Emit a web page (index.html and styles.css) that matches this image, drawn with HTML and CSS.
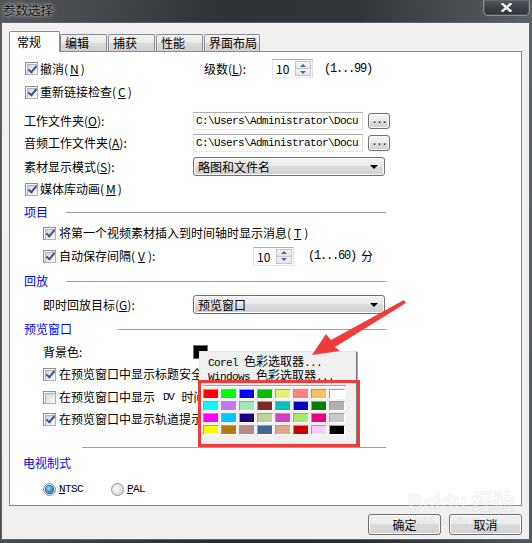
FILE: index.html
```html
<!DOCTYPE html>
<html lang="zh-CN">
<head>
<meta charset="utf-8">
<title>参数选择</title>
<link rel="stylesheet" href="styles.css">
</head>
<body>
<div class="window">
  <div class="titlebar">
    <span class="title">参数选择</span>
    <div class="close">
      <svg width="11" height="9" viewBox="0 0 11 9"><path d="M1.5 1 L9.5 8 M9.5 1 L1.5 8" stroke="#fff" stroke-width="2.4" stroke-linecap="square"/></svg>
    </div>
  </div>

  <div class="client">
    <div class="tabs">
      <div class="tab active">常规</div>
      <div class="tab">编辑</div>
      <div class="tab">捕获</div>
      <div class="tab">性能</div>
      <div class="tab wide">界面布局</div>
    </div>

    <div class="panel">
      <div class="row tall">
        <label class="check top w-undo"><span class="cb on"></span>撤消(<u>N</u>)</label>
        <span class="w-level">级数(<u>L</u>):</span>
        <span class="spin"><span class="spin-val">10</span><span class="spin-btns"><i class="up"></i><i class="down"></i></span></span>
        <span class="lat range">(1...99)</span>
      </div>

      <div class="row mt5">
        <label class="check top"><span class="cb on"></span>重新链接检查(<u>C</u>)</label>
      </div>

      <div class="row mt11">
        <span class="w-label">工作文件夹(<u>O</u>):</span>
        <span class="edit path"><span class="lat">C:\Users\Administrator\Docu</span></span>
        <span class="btn dots">...</span>
      </div>

      <div class="row mt4">
        <span class="w-label">音频工作文件夹(<u>A</u>):</span>
        <span class="edit path"><span class="lat">C:\Users\Administrator\Docu</span></span>
        <span class="btn dots">...</span>
      </div>

      <div class="row tall mt5">
        <span class="w-label">素材显示模式(<u>S</u>):</span>
        <span class="combo">略图和文件名</span>
      </div>

      <div class="row mt4">
        <label class="check top"><span class="cb on"></span>媒体库动画(<u>M</u>)</label>
      </div>

      <div class="row mt5 heading">
        <span>项目</span><span class="rule rule-a"></span>
      </div>

      <div class="row mt3 sub">
        <label class="check"><span class="cb on"></span>将第一个视频素材插入到时间轴时显示消息(<u>T</u>)</label>
      </div>

      <div class="row mt5 sub">
        <label class="check w-auto"><span class="cb on"></span>自动保存间隔(<u>V</u>):</label>
        <span class="spin"><span class="spin-val">10</span><span class="spin-btns"><i class="up"></i><i class="down"></i></span></span>
        <span class="lat range wide">(1...60)</span><span class="unit">分</span>
      </div>

      <div class="row mt7 heading">
        <span>回放</span><span class="rule rule-a"></span>
      </div>

      <div class="row tall mt5 sub">
        <span class="w-sublabel">即时回放目标(<u>G</u>):</span>
        <span class="combo">预览窗口</span>
      </div>

      <div class="row mt6 heading">
        <span>预览窗口</span><span class="rule rule-b"></span>
      </div>

      <div class="row mt5 sub">
        <span class="w-sublabel">背景色:</span>
        <span class="color-well"></span>
      </div>

      <div class="row mt4 sub">
        <label class="check"><span class="cb on"></span>在预览窗口中显示标题安全区域(<u>A</u>)</label>
      </div>

      <div class="row mt5 sub">
        <label class="check"><span class="cb"></span>在预览窗口中显示<span class="lat dv"> DV </span>时间码(<u>D</u>)</label>
      </div>

      <div class="row mt4 sub">
        <label class="check"><span class="cb on"></span>在预览窗口中显示轨道提示(<u>R</u>)</label>
      </div>

      <div class="rule rule-c"></div>

      <div class="row mt6 heading tv">
        <span>电视制式</span>
      </div>

      <div class="row mt8 sub">
        <label class="radio-item"><span class="radio on"></span><span class="lat"><u>N</u>TSC</span></label>
        <label class="radio-item"><span class="radio"></span><span class="lat"><u>P</u>AL</span></label>
      </div>
    </div>

    <div class="actions">
      <button class="btn action">确定</button>
      <button class="btn action">取消</button>
    </div>
  </div>

  <div class="watermark">
    <span class="wm-big">Baidu 经验</span>
    <span class="wm-small">jingyan.baidu.com</span>
  </div>

  <div class="popup">
    <div class="menu-item"><span class="lat">Corel </span>色彩选取器<span class="lat">...</span></div>
    <div class="menu-item"><span class="lat">Windows </span>色彩选取器<span class="lat">...</span></div>
    <div class="menu-sep"></div>
    <div class="swatches">
      <span style="background:#ff0000"></span><span style="background:#00ff00"></span><span style="background:#0000ff"></span><span style="background:#00c000"></span><span style="background:#e8f070"></span><span style="background:#ff8080"></span><span style="background:#f8c060"></span><span style="background:#ffffff"></span>
      <span style="background:#00ffff"></span><span style="background:#c078f0"></span><span style="background:#a0e8b8"></span><span style="background:#7a2c20"></span><span style="background:#00c0c0"></span><span style="background:#0000c0"></span><span style="background:#008000"></span><span style="background:#b0b0b0"></span>
      <span style="background:#ff00ff"></span><span style="background:#00c8ff"></span><span style="background:#180080"></span><span style="background:#c0d098"></span><span style="background:#d040c8"></span><span style="background:#a8e870"></span><span style="background:#e80080"></span><span style="background:#c8c8c8"></span>
      <span style="background:#ffff00"></span><span style="background:#b87810"></span><span style="background:#b88888"></span><span style="background:#406890"></span><span style="background:#e0a888"></span><span style="background:#c80000"></span><span style="background:#ffc8ff"></span><span style="background:#000000"></span>
    </div>
  </div>

  <div class="highlight"></div>

  <svg class="arrow" width="115" height="65" viewBox="0 0 115 65">
    <polygon points="12,60 26,39 31,45 104,5 106,8 35,52 40,56" fill="#ef3b3b"/>
  </svg>
</div>
</body>
</html>
```

FILE: styles.css
```css
* { box-sizing: border-box; }

html, body {
  margin: 0;
  padding: 0;
}

body {
  width: 532px;
  height: 543px;
  overflow: hidden;
  background: #2b2f34;
  font-family: "Noto Sans CJK SC", "Noto Sans", sans-serif;
  font-size: 12px;
  color: #000;
}

u { text-decoration: underline; text-underline-offset: 1px; }

.lat {
  font-family: "Liberation Mono", "Noto Sans CJK SC", monospace;
  font-size: 11px;
  letter-spacing: -0.6px;
  white-space: pre;
}

.lat.dv { letter-spacing: -1.5px; }

/* ---------- window frame ---------- */
.window {
  position: relative;
  width: 532px;
  height: 543px;
  background:
    linear-gradient(180deg, rgba(255,255,255,0.04), rgba(0,0,0,0.05)),
    linear-gradient(90deg, #4b4f54 0%, #3d4146 18%, #272b30 42%, #2a2e33 68%, #4a4f54 92%, #565b60 100%);
}

.titlebar {
  height: 22px;
  display: flex;
  justify-content: space-between;
  align-items: flex-start;
}

.title {
  margin: 2px 0 0 3px;
  font-size: 12.5px;
  line-height: 16px;
  color: #111;
  text-shadow: 0 0 3px rgba(255,255,255,0.75), 0 0 6px rgba(255,255,255,0.5);
}

.close {
  width: 47px;
  height: 16px;
  margin-right: 2px;
  border: 1px solid #8d9298;
  border-top: none;
  border-radius: 0 0 5px 5px;
  background: linear-gradient(#52575d, #3b4046 50%, #2f3439);
  box-shadow: inset 0 0 0 1px rgba(255,255,255,0.12);
  display: flex;
  align-items: center;
  justify-content: center;
}

/* ---------- client area ---------- */
.client {
  margin-left: 1px;
  width: 529px;
  height: 518px;
  border: 1px solid #60656a;
  background: #f0f0f0;
  padding: 8px 0 0 7px;
}

.tabs {
  display: flex;
  align-items: flex-end;
  height: 20px;
  position: relative;
  z-index: 1;
}

.tab {
  width: 47px;
  height: 17px;
  margin-left: 1px;
  padding-left: 4px;
  border: 1px solid #898c95;
  border-bottom: none;
  border-radius: 2px 2px 0 0;
  background: linear-gradient(#f3f3f3, #ebebeb 45%, #dddddd 50%, #cfcfcf);
  line-height: 16px;
}

.tab.active {
  width: 51px;
  height: 21px;
  margin: 0 0 -1px 0;
  padding-left: 7px;
  background: #fff;
  line-height: 19px;
}

.tab.active + .tab { margin-left: 0; }

.tab.wide { width: 56px; }

.panel {
  width: 513px;
  height: 455px;
  border: 1px solid #898c95;
  background: #fff;
  padding: 7px 0 0 14px;
  display: flex;
  flex-direction: column;
}

.row {
  display: flex;
  align-items: center;
  height: 18px;
  flex: none;
  line-height: 16px;
  white-space: nowrap;
}

.row.tall { height: 19px; }

.mt3 { margin-top: 3px; }
.mt4 { margin-top: 4px; }
.mt5 { margin-top: 5px; }
.mt6 { margin-top: 6px; }
.mt7 { margin-top: 7px; }
.mt8 { margin-top: 8px; }
.mt11 { margin-top: 11px; }

.sub { padding-left: 19px; }

/* ---------- check boxes ---------- */
.check {
  display: flex;
  align-items: center;
  gap: 3px;
}

.check.top { margin-left: 1px; gap: 2px; }

.w-undo { width: 179px; }
.w-level { width: 68px; }
.w-label { width: 169px; }
.w-sublabel { width: 150px; }
.w-auto { width: 210px; }

.cb {
  position: relative;
  width: 13px;
  height: 13px;
  flex: none;
  border: 1px solid #8e8f8f;
  background: #f4f4f4;
}

.cb::before {
  content: "";
  position: absolute;
  left: 1px;
  top: 1px;
  width: 9px;
  height: 9px;
  border: 1px solid #b0b4ba;
  background: linear-gradient(135deg, #cdd1d7, #eef0f2 60%, #f8f8f8);
}

.cb.on::after {
  content: "";
  position: absolute;
  left: 3.5px;
  top: 0.5px;
  width: 3px;
  height: 7px;
  border: solid #3b558f;
  border-width: 0 2px 2px 0;
  transform: rotate(40deg);
}

/* ---------- spin boxes ---------- */
.spin {
  width: 41px;
  height: 19px;
  border: 1px solid;
  border-color: #abadb3 #dbdfe6 #e3e9ef #e2e3ea;
  background: #fff;
  display: flex;
  justify-content: space-between;
  padding: 1px;
}

.spin-val {
  padding-left: 2px;
  line-height: 15px;
}

.spin-btns {
  width: 16px;
  display: flex;
  flex-direction: column;
}

.spin-btns i {
  flex: 1;
  display: flex;
  align-items: center;
  justify-content: center;
  border: 1px solid #c2c5ca;
  background: linear-gradient(#f7f7f7, #e4e4e4);
}

.spin-btns i + i { border-top: none; }

.spin-btns .up::after,
.spin-btns .down::after {
  content: "";
  border-left: 3px solid transparent;
  border-right: 3px solid transparent;
}

.spin-btns .up::after { border-bottom: 3px solid #4a67a3; }
.spin-btns .down::after { border-top: 3px solid #4a67a3; }

.range { margin-left: 11px; font-size: 12px; letter-spacing: -1.2px; }
.range.wide { margin-left: 14px; }
.unit { margin-left: 5px; }

/* ---------- edits, combos, buttons ---------- */
.edit {
  height: 18px;
  border: 1px solid;
  border-color: #abadb3 #dbdfe6 #e3e9ef #e2e3ea;
  background: #fff;
  overflow: hidden;
  display: flex;
  align-items: center;
  padding-left: 2px;
}

.path { width: 170px; }

.btn {
  border: 1px solid #707070;
  border-radius: 3px;
  background: linear-gradient(#f2f2f2, #ebebeb 49%, #dddddd 50%, #cfcfcf);
  box-shadow: inset 0 0 0 1px #fbfbfb;
  display: flex;
  align-items: center;
  justify-content: center;
  font: inherit;
  color: #000;
  padding: 0;
}

.dots {
  width: 22px;
  height: 16px;
  margin-left: 5px;
  font-family: "Liberation Mono", monospace;
  font-size: 10px;
  letter-spacing: -1px;
  line-height: 10px;
  align-items: flex-end;
  padding-bottom: 2px;
}

.combo {
  position: relative;
  width: 192px;
  height: 19px;
  border: 1px solid #707070;
  border-radius: 3px;
  background: linear-gradient(#f2f2f2, #ebebeb 49%, #dddddd 50%, #cfcfcf);
  box-shadow: inset 0 0 0 1px #fbfbfb;
  padding-left: 4px;
  line-height: 17px;
}

.combo::after {
  content: "";
  position: absolute;
  right: 6px;
  top: 7px;
  border-left: 4px solid transparent;
  border-right: 4px solid transparent;
  border-top: 4px solid #000;
}

/* ---------- section headings ---------- */
.heading {
  color: #0000ff;
  justify-content: space-between;
  width: 362px;
}

.heading.tv { margin-left: -1px; }

.rule {
  height: 1px;
  background: #a0a0a0;
}

.rule-a { width: 320px; }
.rule-b { width: 268px; }

.rule-c {
  width: 304px;
  margin: 19px 0 0 58px;
  flex: none;
}

.color-well {
  width: 15px;
  height: 14px;
  background: #000;
  border: 1px solid #6e6e6e;
}

/* ---------- radio buttons ---------- */
.radio-item {
  display: flex;
  align-items: center;
  gap: 3px;
  width: 68px;
}

.radio {
  width: 13px;
  height: 13px;
  border-radius: 50%;
  border: 1px solid #8e8f8f;
  background: radial-gradient(circle at 40% 40%, #fdfdfd, #dcdcdc 70%, #c8c8c8);
  display: flex;
  align-items: center;
  justify-content: center;
}

.radio.on::after {
  content: "";
  width: 7px;
  height: 7px;
  border-radius: 50%;
  background: radial-gradient(circle at 40% 35%, #9fdcff, #2f8fdb 55%, #0c4a8c);
  box-shadow: 0 0 0 1px #1d5a94;
}

/* ---------- dialog buttons ---------- */
.actions {
  width: 513px;
  margin-top: 8px;
  display: flex;
  justify-content: flex-end;
  gap: 8px;
}

.action {
  width: 73px;
  height: 21px;
}

/* ---------- overlays ---------- */
.watermark {
  position: absolute;
  left: 397px;
  top: 490px;
  display: flex;
  flex-direction: column;
  align-items: flex-start;
  pointer-events: none;
}

.wm-big {
  font-family: "Liberation Sans", "Noto Sans CJK SC", sans-serif;
  font-size: 21px;
  font-weight: bold;
  line-height: 24px;
  margin-left: 11px;
  color: rgba(255,255,255,0.35);
  -webkit-text-stroke: 1px rgba(190,190,190,0.22);
}

.wm-small {
  font-family: "Liberation Sans", sans-serif;
  font-size: 12px;
  line-height: 12px;
  margin-top: 2px;
  color: rgba(190,190,190,0.22);
}

.popup {
  position: absolute;
  left: 199px;
  top: 351px;
  width: 158px;
  height: 94px;
  background: #f0f0f0;
  border: 1px solid;
  border-color: #e6e6e6 #7a7a7a #7a7a7a #e6e6e6;
  box-shadow: 1px 1px 0 #a8a8a8;
  padding: 2px 0 0 3px;
}

.menu-item {
  height: 14px;
  line-height: 14px;
  padding-left: 5px;
  white-space: nowrap;
}

.menu-sep {
  width: 143px;
  height: 2px;
  margin-top: 3px;
  border-top: 1px solid #a0a0a0;
  border-bottom: 1px solid #fff;
}

.swatches {
  margin-top: 2px;
  display: grid;
  grid-template-columns: repeat(8, 16px);
  grid-auto-rows: 10px;
  gap: 2px;
}

.swatches span {
  border: 1px solid;
  border-color: #a0a0a0 #ffffff #ffffff #a0a0a0;
}

.highlight {
  position: absolute;
  left: 198px;
  top: 380px;
  width: 162px;
  height: 67px;
  border: 3px solid #ef3b3b;
}

.arrow {
  position: absolute;
  left: 300px;
  top: 295px;
}
```
